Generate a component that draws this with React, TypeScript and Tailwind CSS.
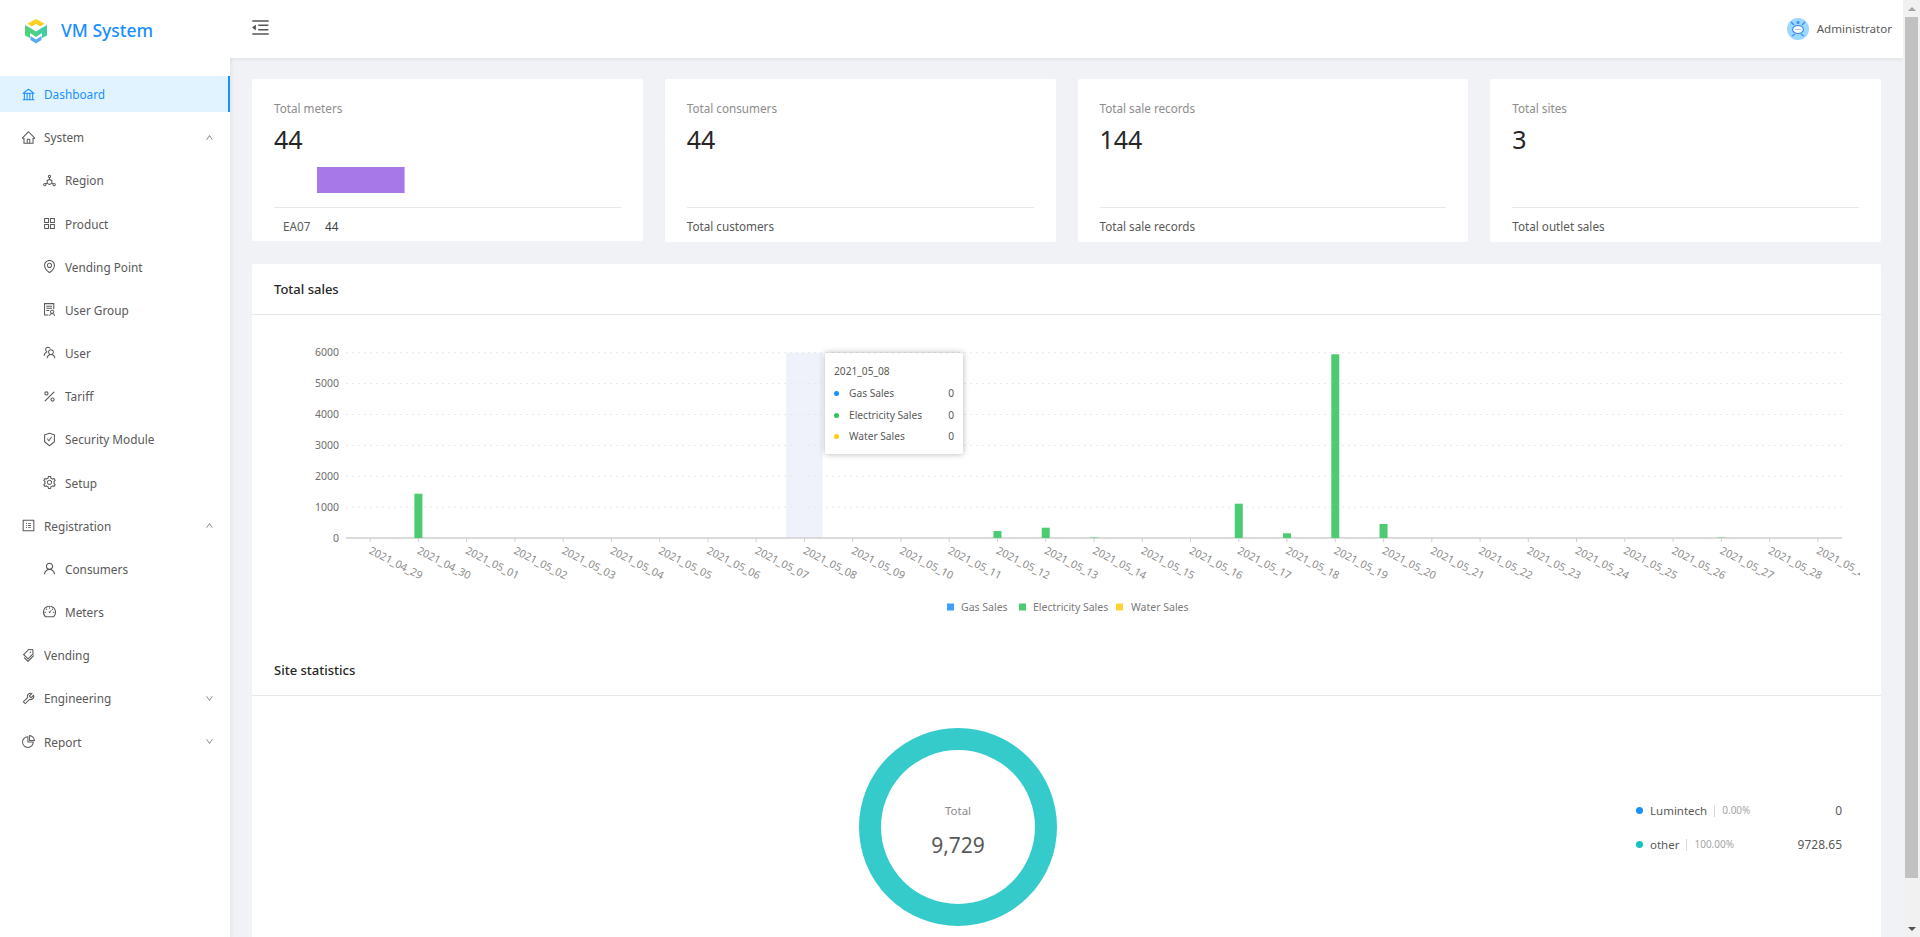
import { ComponentType } from "react";
import {
  AiOutlineAppstore,
  AiOutlineBank,
  AiOutlineDashboard,
  AiOutlineDeploymentUnit,
  AiOutlineDown,
  AiOutlineEnvironment,
  AiOutlineHome,
  AiOutlineMenuFold,
  AiOutlinePercentage,
  AiOutlinePieChart,
  AiOutlineProfile,
  AiOutlineSafetyCertificate,
  AiOutlineSetting,
  AiOutlineSolution,
  AiOutlineTags,
  AiOutlineTeam,
  AiOutlineTool,
  AiOutlineUp,
  AiOutlineUser,
} from "react-icons/ai";

type MenuItem = {
  label: string;
  icon: ComponentType<{ className?: string }>;
  sub?: boolean;
  active?: boolean;
  arrow?: "up" | "down";
};

const menu: MenuItem[] = [
  { label: "Dashboard", icon: AiOutlineBank, active: true },
  { label: "System", icon: AiOutlineHome, arrow: "up" },
  { label: "Region", icon: AiOutlineDeploymentUnit, sub: true },
  { label: "Product", icon: AiOutlineAppstore, sub: true },
  { label: "Vending Point", icon: AiOutlineEnvironment, sub: true },
  { label: "User Group", icon: AiOutlineSolution, sub: true },
  { label: "User", icon: AiOutlineTeam, sub: true },
  { label: "Tariff", icon: AiOutlinePercentage, sub: true },
  { label: "Security Module", icon: AiOutlineSafetyCertificate, sub: true },
  { label: "Setup", icon: AiOutlineSetting, sub: true },
  { label: "Registration", icon: AiOutlineProfile, arrow: "up" },
  { label: "Consumers", icon: AiOutlineUser, sub: true },
  { label: "Meters", icon: AiOutlineDashboard, sub: true },
  { label: "Vending", icon: AiOutlineTags },
  { label: "Engineering", icon: AiOutlineTool, arrow: "down" },
  { label: "Report", icon: AiOutlinePieChart, arrow: "down" },
];

const stats = [
  { title: "Total meters", value: "44", footer: "Total customers" },
  { title: "Total consumers", value: "44", footer: "Total customers" },
  { title: "Total sale records", value: "144", footer: "Total sale records" },
  { title: "Total sites", value: "3", footer: "Total outlet sales" },
];

const dates = [
  "2021_04_29", "2021_04_30", "2021_05_01", "2021_05_02", "2021_05_03", "2021_05_04",
  "2021_05_05", "2021_05_06", "2021_05_07", "2021_05_08", "2021_05_09", "2021_05_10",
  "2021_05_11", "2021_05_12", "2021_05_13", "2021_05_14", "2021_05_15", "2021_05_16",
  "2021_05_17", "2021_05_18", "2021_05_19", "2021_05_20", "2021_05_21", "2021_05_22",
  "2021_05_23", "2021_05_24", "2021_05_25", "2021_05_26", "2021_05_27", "2021_05_28",
  "2021_05_29",
];

// bar top in page pixels, by date index
const bars: [number, number][] = [
  [1, 493.7],
  [13, 531],
  [14, 527.7],
  [15, 537.5],
  [18, 503.7],
  [19, 533.3],
  [20, 354.3],
  [21, 524],
  [28, 537.6],
];

const axisLeft = 346;
const axisRight = 1842;
const axisY = 538;
const band = (axisRight - axisLeft) / 31;
const tickX = (i: number) => axisLeft + band * (i + 0.5);

const Logo = () => (
  <svg width="24" height="26" viewBox="0 0 24 26">
    <polygon points="6.5,18 12,21.5 17.5,18 17.5,22 12,25.5 6.5,22" fill="#5aa9f5" />
    <polygon points="3.5,5.5 12,1 20.5,5.5 16.5,8.5 12,6 7.5,8.5" fill="#fbd224" />
    <polygon points="1,7 5.5,9.5 12,13.5 12,19 6,15 6,20 1,17.5" fill="#4fd07e" />
    <polygon points="23,7 18.5,9.5 12,13.5 12,19 18,15 18,20 23,17.5" fill="#45cba0" />
  </svg>
);

const Avatar = () => (
  <svg width="22" height="22" viewBox="0 0 22 22">
    <circle cx="11" cy="11" r="11" fill="#9bd8ff" />
    <path d="M4 4l3 3M18 4l-3 3M5 18l3-2M17 18l-3-2" stroke="#3c8cf0" strokeWidth="1.4" />
    <circle cx="11" cy="4.5" r="1.5" fill="#3c8cf0" />
    <ellipse cx="11" cy="11.5" rx="6" ry="4.5" fill="#3c8cf0" />
    <ellipse cx="11" cy="11.5" rx="4.8" ry="3.4" fill="#ffffff" />
    <path d="M8.5 11.5h1M10.5 11.5h1M12.5 11.5h1" stroke="#3c8cf0" />
  </svg>
);

const Sidebar = () => (
  <aside className="w-[230px] h-full shrink-0 bg-white shadow-[1px_0_4px_rgba(0,21,41,0.08)] z-10">
    <div className="h-[62px] flex items-center pl-[24px] pb-[1px]">
      <Logo />
      <span className="ml-[13px] text-[17.5px] font-medium text-[#1890ff]">VM System</span>
    </div>
    <ul className="mt-[14px] flex flex-col gap-[7.17px]">
      {menu.map((item) => {
        const Icon = item.icon;
        return (
          <li
            key={item.label}
            className={`h-[36px] flex items-center text-[11.8px] ${item.sub ? "pl-[42px]" : "pl-[21px]"} ${
              item.active
                ? "bg-[#e1f3ff] text-[#1890ff] border-r-[2px] border-[#1890ff]"
                : "text-[#595959]"
            }`}
          >
            <Icon className="w-[15px] h-[15px]" />
            <span className="ml-[8px] pt-[2px]">{item.label}</span>
            {item.arrow === "up" && <AiOutlineUp className="ml-auto mr-[16px] w-[9px] h-[9px] text-[#7f7f7f]" />}
            {item.arrow === "down" && <AiOutlineDown className="ml-auto mr-[16px] w-[9px] h-[9px] text-[#7f7f7f]" />}
          </li>
        );
      })}
    </ul>
  </aside>
);

const Header = () => (
  <header className="h-[58px] shrink-0 bg-white shadow-[0_1px_4px_rgba(0,21,41,0.08)] flex items-center pl-[20px] pr-[11px] pb-[1px] z-10">
    <AiOutlineMenuFold className="w-[21px] h-[21px] text-[#555555] -mt-[2px]" />
    <div className="ml-auto flex items-center gap-[8px]">
      <Avatar />
      <span className="text-[11.6px] pt-[1px] text-[#595959]">Administrator</span>
    </div>
  </header>
);

const StatCard = ({ title, value, footer, index }: { title: string; value: string; footer: string; index: number }) => (
  <div className={`bg-white rounded-[2px] px-[22px] pt-[20px] overflow-hidden ${index === 0 ? "h-[162px]" : "h-[163px]"}`}>
    <div className="text-[11.7px] leading-[18px] text-[#8c8c8c]">{title}</div>
    <div className="text-[25px] leading-[34px] mt-[5px] text-[#262626]">{value}</div>
    <div className="h-[51px] pt-[11px]">
      {index === 0 && <div className="ml-[43px] w-[88px] h-[26px] bg-[#a678e8] border-r border-[#cdb0f5]" />}
    </div>
    <div className="border-t border-[#e8e8e8] pt-[9px] text-[11.7px] leading-[18px] text-[#595959]">
      {index === 0 ? (
        <div className="flex pl-[9px]">
          <span className="w-[42px]">EA07</span>
          <span className="text-[#404040]">44</span>
        </div>
      ) : (
        footer
      )}
    </div>
  </div>
);

const SalesChart = () => (
  <div className="relative h-[328px]">
    <svg width="1629" height="328" viewBox="252 315 1629 328" className="block">
      <rect x="786" y="352.7" width="36.5" height="185.3" fill="#eff2fa" />
      {[0, 1000, 2000, 3000, 4000, 5000, 6000].map((v, i) => {
        const y = axisY - i * 30.88;
        return (
          <g key={v}>
            {i > 0 && <line x1={axisLeft} x2={axisRight} y1={y} y2={y} stroke="#e8e8e8" strokeDasharray="2 4" />}
            <text x="339" y={y + 3.5} textAnchor="end" fontSize="10.5" fill="#6e6e6e">
              {v}
            </text>
          </g>
        );
      })}
      <line x1={axisLeft} x2={axisRight} y1={axisY} y2={axisY} stroke="#cfcfcf" strokeWidth="1.5" />
      {dates.map((d, i) => (
        <g key={d}>
          <line x1={tickX(i)} x2={tickX(i)} y1={axisY} y2={axisY + 4} stroke="#cfcfcf" />
          <text
            transform={`translate(${tickX(i) - 2} 553) rotate(27)`}
            fontSize="10.7"
            fill="#8c8c8c"
          >
            {d}
          </text>
        </g>
      ))}
      <rect x="1860" y="540" width="21" height="60" fill="#ffffff" />
      {bars.map(([i, top]) => (
        <rect key={i} x={tickX(i) - 4} y={top} width="8" height={axisY - top} fill="#4dcb73" />
      ))}
      <rect x="947" y="603.5" width="7" height="7" fill="#3ba0ff" />
      <text x="961" y="611" fontSize="10.5" fill="#7a7a7a">Gas Sales</text>
      <rect x="1019" y="603.5" width="7" height="7" fill="#4dcb73" />
      <text x="1033" y="611" fontSize="10.5" fill="#7a7a7a">Electricity Sales</text>
      <rect x="1116" y="603.5" width="7" height="7" fill="#fad337" />
      <text x="1131" y="611" fontSize="10.5" fill="#7a7a7a">Water Sales</text>
    </svg>
    <div className="absolute left-[573px] top-[38px] w-[138px] h-[101px] bg-white rounded-[2px] shadow-[0_0_6px_rgba(0,0,0,0.3)] px-[9px] pt-[9px] text-[10.2px] text-[#595959]">
      <div className="leading-[18px] mb-[3px]">2021_05_08</div>
      {[
        { name: "Gas Sales", dot: "bg-[#1890ff]" },
        { name: "Electricity Sales", dot: "bg-[#2fc25b]" },
        { name: "Water Sales", dot: "bg-[#facc14]" },
      ].map((row) => (
        <div key={row.name} className="flex items-center h-[21.5px]">
          <span className={`w-[5px] h-[5px] rounded-full ${row.dot}`} />
          <span className="ml-[10px]">{row.name}</span>
          <span className="ml-auto">0</span>
        </div>
      ))}
    </div>
  </div>
);

const SiteLegend = () => (
  <div className="w-[206px] mr-[39px] flex flex-col gap-[13px] text-[11.5px] text-[#595959]">
    <div className="flex items-center h-[21px]">
      <span className="w-[7px] h-[7px] rounded-full bg-[#1890ff]" />
      <span className="ml-[7px]">Lumintech</span>
      <span className="mx-[7px] h-[12px] border-l border-[#d9d9d9]" />
      <span className="text-[10px] text-[#a6a6a6]">0.00%</span>
      <span className="ml-auto text-[12px]">0</span>
    </div>
    <div className="flex items-center h-[21px]">
      <span className="w-[7px] h-[7px] rounded-full bg-[#13c2c2]" />
      <span className="ml-[7px]">other</span>
      <span className="mx-[7px] h-[12px] border-l border-[#d9d9d9]" />
      <span className="text-[10px] text-[#a6a6a6]">100.00%</span>
      <span className="ml-auto text-[12px]">9728.65</span>
    </div>
  </div>
);

const Scrollbar = () => (
  <div className="w-[17px] h-full shrink-0 bg-[#f1f1f1] flex flex-col items-center">
    <div className="h-[17px] flex items-center justify-center">
      <div className="w-0 h-0 border-x-[4px] border-x-transparent border-b-[4px] border-b-[#a3a3a3]" />
    </div>
    <div className="w-[13px] h-[861px] bg-[#c1c1c1]" />
    <div className="flex-1 flex items-end pb-[6px]">
      <div className="w-0 h-0 border-x-[4px] border-x-transparent border-t-[4px] border-t-[#505050]" />
    </div>
  </div>
);

export default function App() {
  return (
    <div className="h-[937px] w-[1920px] overflow-hidden flex bg-[#f0f2f5] font-['Noto_Sans','Open_Sans',sans-serif]">
      <Sidebar />
      <main className="flex-1 min-w-0 h-full flex flex-col overflow-hidden">
        <Header />
        <div className="px-[22px] pt-[21px]">
          <div className="grid grid-cols-4 gap-[22px] items-start mb-[22px]">
            {stats.map((s, i) => (
              <StatCard key={s.title} index={i} title={s.title} value={s.value} footer={s.footer} />
            ))}
          </div>
          <section className="bg-white rounded-t-[2px]">
            <h2 className="h-[51px] px-[22px] pt-[2px] flex items-center border-b border-[#e8e8e8] text-[13px] font-medium text-[#262626]">
              Total sales
            </h2>
            <SalesChart />
          </section>
          <section className="bg-white h-[400px]">
            <h2 className="h-[53px] px-[22px] pt-[4px] flex items-center border-b border-[#e8e8e8] text-[13px] font-medium text-[#262626]">
              Site statistics
            </h2>
            <div className="flex items-start pt-[32px]">
              <div className="flex-1 flex justify-center pl-[28px]">
                <div className="relative w-[198px] h-[198px]">
                  <svg width="198" height="198" viewBox="0 0 198 198">
                    <circle cx="99" cy="99" r="88" fill="none" stroke="#36cbcb" strokeWidth="22" />
                  </svg>
                  <div className="absolute inset-0 flex flex-col items-center pt-[74px]">
                    <span className="text-[11.5px] leading-[18px] text-[#8c8c8c]">Total</span>
                    <span className="text-[21px] leading-[28px] mt-[11px] text-[#595959]">9,729</span>
                  </div>
                </div>
              </div>
              <div className="pt-[72px]">
                <SiteLegend />
              </div>
            </div>
          </section>
        </div>
      </main>
      <Scrollbar />
    </div>
  );
}
